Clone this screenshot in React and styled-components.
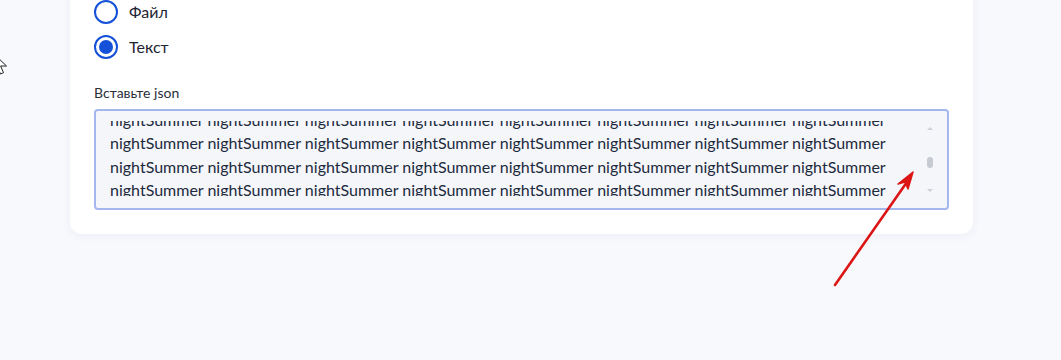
import React, { useEffect, useRef } from 'react';
import styled, { createGlobalStyle } from 'styled-components';

const GlobalStyle = createGlobalStyle`
  html, body {
    margin: 0;
    padding: 0;
    background: #f8f9fd;
    font-family: Lato, "Noto Sans", sans-serif;
    overflow: hidden;
  }
`;

const Page = styled.div`
  position: relative;
  width: 1061px;
  height: 360px;
  overflow: hidden;
  background: #f8f9fd;
`;

const Card = styled.div`
  margin: -24px 0 0 70px;
  width: 903px;
  box-sizing: border-box;
  padding: 24px;
  background: #fff;
  border-radius: 12px;
  box-shadow: 0 2px 10px rgba(40, 60, 120, 0.06);
`;

const RadioList = styled.div`
  display: flex;
  flex-direction: column;
  gap: 11px;
`;

const RadioRow = styled.label`
  display: flex;
  align-items: center;
  gap: 11px;
  height: 24px;
  font-size: 16px;
  line-height: 22px;
  color: #1f2633;
  cursor: pointer;
`;

const RadioCircle = styled.span`
  flex: none;
  width: 24px;
  height: 24px;
  box-sizing: border-box;
  border-radius: 50%;
  border: 2px solid #1450d8;
  display: flex;
  align-items: center;
  justify-content: center;

  &::after {
    content: '';
    width: 14px;
    height: 14px;
    border-radius: 50%;
    background: #1450d8;
    display: ${props => (props.checked ? 'block' : 'none')};
  }
`;

const FieldLabel = styled.div`
  margin-top: 26px;
  margin-bottom: 8px;
  font-size: 14px;
  line-height: 16px;
  color: #2a2f3a;
`;

const Field = styled.div`
  display: flex;
  height: 101px;
  box-sizing: border-box;
  padding: 10px 12px 12px 14px;
  border: 2px solid #a3b6ee;
  border-radius: 4px;
  background: #f5f6fa;
`;

const TextArea = styled.textarea`
  flex: 1;
  display: block;
  height: 75px;
  margin: 0;
  padding: 0;
  border: none;
  background: transparent;
  font-family: Lato, "Noto Sans", sans-serif;
  font-size: 16px;
  line-height: 23.5px;
  color: #1c2a3e;
  resize: none;
  outline: none;
  overflow: hidden;
  scrollbar-width: none;
`;

const ScrollTrack = styled.div`
  flex: none;
  width: 10px;
  height: 75px;
  box-sizing: border-box;
  padding: 6px 0 4px;
  display: flex;
  flex-direction: column;
  align-items: center;
`;

const Arrow = styled.span`
  width: 0;
  height: 0;
  border-left: 3px solid transparent;
  border-right: 3px solid transparent;
  ${props =>
    props.down
      ? 'border-top: 3px solid #cdd1d9; margin-top: auto;'
      : 'border-bottom: 3px solid #cdd1d9;'}
`;

const Thumb = styled.span`
  margin-top: 27px;
  width: 6px;
  height: 11px;
  border-radius: 3px;
  background: #c6cad3;
`;

const Overlay = styled.svg`
  position: absolute;
  pointer-events: none;
`;

const text = Array.from({ length: 14 }, () => Array(8).fill('nightSummer').join(' ')).join(' ');

export default function App() {
  const ref = useRef(null);
  useEffect(() => {
    if (ref.current) ref.current.scrollTop = 131;
  }, []);

  return (
    <Page>
      <GlobalStyle />
      <Card>
        <RadioList>
          <RadioRow>
            <RadioCircle />
            Файл
          </RadioRow>
          <RadioRow>
            <RadioCircle checked />
            Текст
          </RadioRow>
        </RadioList>
        <FieldLabel>Вставьте json</FieldLabel>
        <Field>
          <TextArea ref={ref} defaultValue={text} readOnly />
          <ScrollTrack>
            <Arrow />
            <Thumb />
            <Arrow down />
          </ScrollTrack>
        </Field>
      </Card>

      <Overlay style={{ left: -8, top: 52 }} width="20" height="26" viewBox="0 0 20 26">
        <path d="M1 1 L1 19 L5.5 15 L8.5 22 L11.5 20.7 L8.6 14 L14.5 14 Z" fill="#fff" stroke="#222" strokeWidth="1" strokeLinejoin="round" />
      </Overlay>

      <Overlay style={{ left: 825, top: 160 }} width="100" height="135" viewBox="0 0 100 135">
        <line x1="10" y1="125" x2="82" y2="22" stroke="#dc1515" strokeWidth="2.6" strokeLinecap="round" />
        <path d="M88 12 L73 24 L80 22 L83 29 Z" fill="#dc1515" stroke="#dc1515" strokeWidth="1.5" strokeLinejoin="round" />
      </Overlay>
    </Page>
  );
}
